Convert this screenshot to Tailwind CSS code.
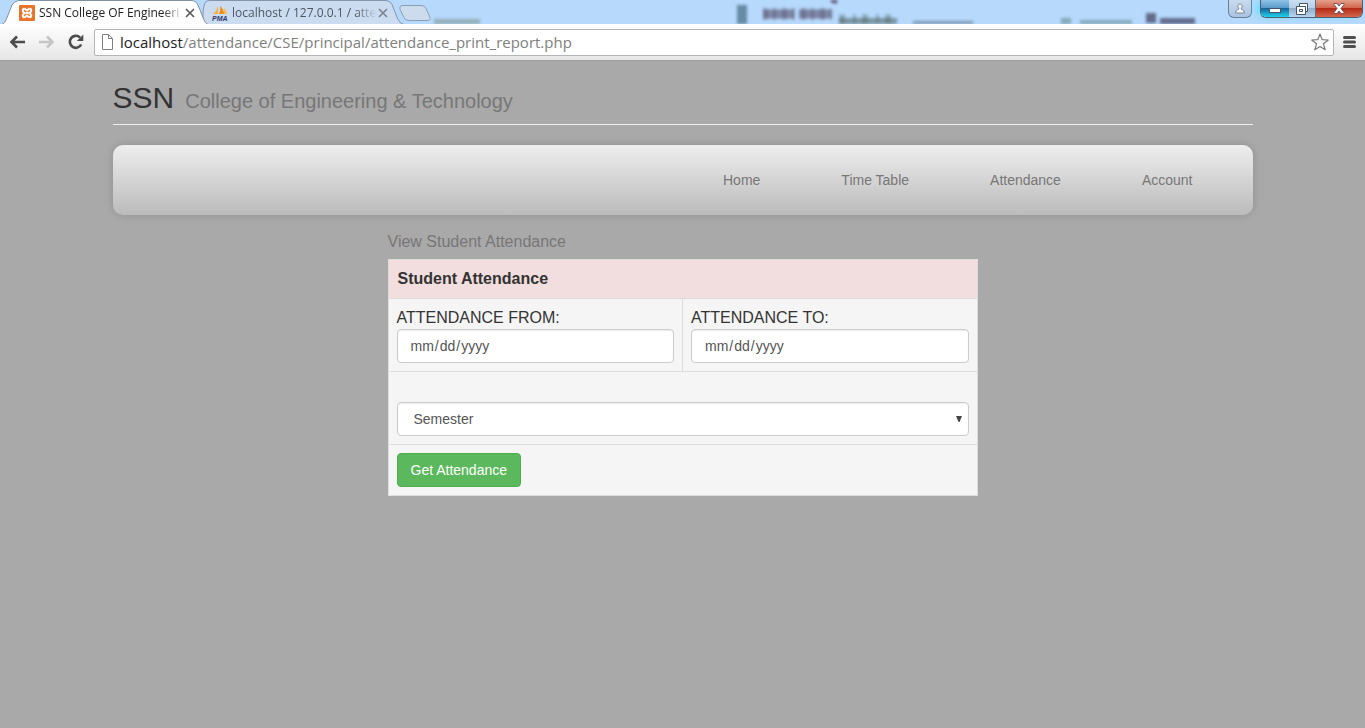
<!DOCTYPE html>
<html lang="en">
<head>
<meta charset="utf-8">
<meta name="viewport" content="width=device-width, initial-scale=1">
<title>SSN College OF Engineering</title>
<script src="https://cdn.jsdelivr.net/npm/@tailwindcss/browser@4"></script>
</head>
<body class="flex min-h-screen flex-col bg-[#a9a9a9] font-['Liberation_Sans',Arial,sans-serif] text-sm text-[#333]">

<header class="font-['Open_Sans','Noto_Sans',sans-serif]">
  <!-- Window title bar -->
  <div class="relative flex h-6 items-start overflow-hidden bg-[#b7d9fc]">
    <!-- Desktop showing softly through the glass -->
    <svg class="absolute right-0 top-0 h-6 w-[965px] blur-[1.5px]" viewBox="400 0 965 24" aria-hidden="true">
      <g fill="none">
        <path d="M434 22h46" stroke="#6f8578" stroke-width="6" opacity=".5"/>
        <path d="M742 5v19" stroke="#497088" stroke-width="10" opacity=".75"/>
        <path d="M763 14h31M799 14h33" stroke="#57506c" stroke-width="9" opacity=".6"/>
        <path d="M763 14h69" stroke="#57506c" stroke-width="12" stroke-dasharray="5 5 3 6" opacity=".35"/>
        <path d="M831 0l6 2" stroke="#57506c" stroke-width="4"/>
        <path d="M839 21h58" stroke="#4c625f" stroke-width="6" opacity=".55"/>
        <path d="M839 19h58" stroke="#4c625f" stroke-width="9" stroke-dasharray="6 8 3 6" opacity=".4"/>
        <path d="M913 23h60" stroke="#4c6175" stroke-width="4" opacity=".55"/>
        <path d="M1061 21h10M1080 23h52" stroke="#4d7a78" stroke-width="6" opacity=".5"/>
        <path d="M1146 18h10M1160 23h35" stroke="#3e3d5c" stroke-width="10" opacity=".7"/>
      </g>
    </svg>
    <svg class="absolute left-0 top-0 h-6 w-[440px]" viewBox="0 0 440 24" aria-hidden="true">
      <defs>
        <linearGradient id="tab" x2="0" y2="1"><stop offset="0" stop-color="#fff"/><stop offset="1" stop-color="#fdfdfd"/></linearGradient>
      </defs>
      <path d="M196 25q8-1 7-10Q203 5 206 1.500Q208 .5 210 .5H386q4 0 6 4l6 15q2 4 6 5z" fill="#cbdcf0" stroke="#8295ab"/>
      <path d="M402 5.500h19q4 0 5 3l4 9q1 3-3 3h-18q-4 0-5-3l-4-8q-1-4 2-4z" fill="#cddcec" stroke="#8a9db4"/>
      <path d="M-1 25q5 0 7-5l6-15q2-4 7-4.500H191q5 0 7 4.500l6 15q2 5 7 5z" fill="url(#tab)" stroke="#8090a3"/>
    </svg>
    <div class="relative flex h-6 flex-1 pl-[19px]">
      <div class="flex w-[193px] items-center pb-0.5 pt-1">
        <svg class="mb-px size-4 shrink-0" viewBox="0 0 16 16" aria-hidden="true">
          <rect width="16" height="16" rx="1" fill="#e8742b"/>
          <path d="M5.500 3.500L8 5.500l2.500-2M5.500 12.500L8 10.500l2.500 2M5.300 3.500a2 2 0 0 0-1 3.300L5.500 8 4.300 9.200a2 2 0 0 0 1 3.300M10.700 3.500a2 2 0 0 1 1 3.300L10.500 8l1.200 1.200a2 2 0 0 1-1 3.300M6.500 8h3" fill="none" stroke="#fff" stroke-width="2"/>
        </svg>
        <span class="ml-1 w-[145px] whitespace-nowrap text-xs leading-4 text-[#222] mask-r-from-85% mask-r-to-100%">SSN College OF Engineeri</span>
        <button class="size-3" aria-label="Close tab"><svg class="size-3" viewBox="0 0 12 12"><path d="M2 2l8 8M10 2l-8 8" stroke="#555" stroke-width="1.600"/></svg></button>
      </div>
      <div class="flex items-center pb-0.5 pt-1">
        <svg class="size-4 shrink-0" viewBox="0 0 16 16" aria-hidden="true">
          <path d="M6 0v9H1Q5 6 6 0z" fill="#f7b14a"/><path d="M8 1q4 3 4 8H7q2-4 1-8z" fill="#f29111"/><path d="M12 3q3 3 3 6h-3z" fill="#f9b95c"/>
          <text x="0" y="16" font-family="Liberation Sans" font-size="7" font-weight="bold" font-style="italic" fill="#33366d">PMA</text>
        </svg>
        <span class="ml-1 w-[145px] whitespace-nowrap text-xs leading-4 text-[#4d5661] mask-r-from-85% mask-r-to-100%">localhost / 127.0.0.1 / atte</span>
        <button class="size-3" aria-label="Close tab"><svg class="size-3" viewBox="0 0 12 12"><path d="M2 2l8 8M10 2l-8 8" stroke="#7c838c" stroke-width="1.600"/></svg></button>
      </div>
    </div>
    <div class="relative flex gap-2 pr-0.5">
      <button aria-label="Profile" class="flex h-[18px] w-6 items-center justify-center rounded-b-md border border-t-0 border-[#66809c] bg-linear-to-b from-[#c8dbef] to-[#abc4e0]">
        <svg class="h-3 w-3" viewBox="0 0 12 12"><path d="M6 1a2.300 2.300 0 0 1 1.200 4.200v1Q10.500 6.800 10.500 10h-9q0-3.200 3.300-3.800v-1A2.300 2.300 0 0 1 6 1z" fill="#fff" stroke="#6c7f95" stroke-width=".9"/></svg>
      </button>
      <div class="flex h-[18px] overflow-hidden rounded-b-md border border-t-0 border-[#4d5d72] shadow-[-6px_0_8px_-3px_#4fe3ff]">
        <button aria-label="Minimize" class="flex w-7 items-center justify-center bg-[linear-gradient(#8ec3e8,#5a9bcb_45%,#14669b_50%,#20d3ee)] pt-1">
          <svg class="h-[5px] w-3" viewBox="0 0 12 5"><rect x=".5" y=".5" width="11" height="4" fill="#fff" stroke="#435368"/></svg>
        </button>
        <button aria-label="Restore" class="flex w-[27px] items-center justify-center border-r border-[#5c6f87] bg-[linear-gradient(#ccdff2,#b9cfe8_45%,#92acc9_50%,#b8d6ef)]">
          <svg class="size-3" viewBox="0 0 12 12"><path d="M3.500.5h8v8h-2v3h-9v-8h3z" fill="#fff" stroke="#435368"/><path d="M3.500 3.500h6v5M3.500 6.500h3v2h-3z" fill="none" stroke="#435368"/></svg>
        </button>
        <button aria-label="Close window" class="flex w-[46px] items-center justify-center bg-[linear-gradient(#e5a08c,#d2674f_45%,#b52b16_50%,#d4674c)]">
          <svg class="h-[11px] w-3" viewBox="0 0 12 11"><path d="M1 .5h3l2 2.500L8 .5h3v1L8 5.500l3 4v1H8L6 8l-2 2.500H1v-1l3-4-3-4z" fill="#fff" stroke="#6b4a50" stroke-width=".9"/></svg>
        </button>
      </div>
    </div>
  </div>
  <!-- Toolbar -->
  <div class="flex h-[37px] items-center border-b border-[#a0a0a0] bg-linear-to-b from-white to-[#e6e6e6]">
    <div class="flex items-center gap-3 pl-2 pr-2">
      <button aria-label="Back"><svg class="size-[18px]" viewBox="0 0 18 18"><path d="M9 3.500L3.500 9 9 14.500M4 9h13" fill="none" stroke="#4b4b4b" stroke-width="2.600"/></svg></button>
      <button aria-label="Forward"><svg class="size-[18px]" viewBox="0 0 18 18"><path d="M9 3.500l5.500 5.500L9 14.500M14 9H1" fill="none" stroke="#c5c5c5" stroke-width="2.600"/></svg></button>
      <button aria-label="Reload"><svg class="size-[18px]" viewBox="0 0 18 18"><path d="M13.200 11.500A6 6 0 1 1 12 4.500" fill="none" stroke="#4b4b4b" stroke-width="2.600"/><path d="M15.300 1.500V8H8.800z" fill="#4b4b4b"/></svg></button>
    </div>
    <div class="flex h-[27px] flex-1 items-center rounded-xs border border-[#b5b5b5] bg-white pl-1.5 pr-1">
      <svg class="h-4 w-[13px]" viewBox="0 0 13 16" aria-hidden="true"><path d="M1.500.5h6l4 4v11h-10zM7.500.5v4h4" fill="#fff" stroke="#808080"/></svg>
      <div class="ml-1.5 flex-1 whitespace-nowrap text-[15px] leading-5 text-[#808080]"><span class="text-[#222]">localhost</span>/attendance/CSE/principal/attendance_print_report.php</div>
      <button aria-label="Bookmark this page"><svg class="size-[18px]" viewBox="0 0 18 18"><path d="M9 1l2.200 5.700 6.100.3-4.800 3.800 1.700 6L9 13.400l-5.200 3.400 1.700-6L.7 7l6.100-.3z" fill="#fff" stroke="#777" stroke-width="1.200" stroke-linejoin="round"/></svg></button>
    </div>
    <button aria-label="Menu" class="ml-2 mr-2"><svg class="h-[14px] w-[15px]" viewBox="0 0 15 14"><path d="M2.500 2.500h10M2.500 7h10M2.500 11.500h10" stroke="#4f4f4f" stroke-width="3" stroke-linecap="round"/></svg></button>
  </div>
</header>

<main class="mx-auto w-full max-w-[1170px] px-[15px] pt-5">
  <h1 class="flex items-baseline gap-[11px] border-b border-[#eee] pb-[9px] text-[30px] leading-[34px]">SSN <small class="text-xl leading-6 text-[#777]">College of Engineering &amp; Technology</small></h1>
  <nav class="mt-5 flex h-[70px] items-center justify-end gap-[81px] rounded-[10px] bg-linear-to-b from-[#eee] to-[#bbb] pr-[60px] text-[#777] shadow-[0_0_10px_rgba(0,0,0,0.15)]">
    <a href="#">Home</a><a href="#">Time Table</a><a href="#">Attendance</a><a href="#">Account</a>
  </nav>
  <form class="mx-auto mt-4 max-w-[590px] text-base leading-[22px]">
    <h2 class="mb-1.5 text-[#777]">View Student Attendance</h2>
    <table class="w-full table-fixed border-collapse border border-[#ddd] bg-[#f5f5f5]">
      <thead>
        <tr><th colspan="2" class="border border-[#ddd] bg-[#f2dede] px-[9px] py-2 text-left">Student Attendance</th></tr>
      </thead>
      <tbody>
        <tr>
          <td class="border border-[#ddd] p-2"><label for="from" class="block">ATTENDANCE FROM:</label>
            <input id="from" type="date" class="block h-[34px] w-full rounded border border-[#ccc] bg-white px-3 text-sm text-[#555] shadow-[inset_0_1px_1px_rgba(0,0,0,0.08)] [&::-webkit-calendar-picker-indicator]:hidden"></td>
          <td class="border border-[#ddd] p-2"><label for="to" class="block">ATTENDANCE TO:</label>
            <input id="to" type="date" class="block h-[34px] w-full rounded border border-[#ccc] bg-white px-3 text-sm text-[#555] shadow-[inset_0_1px_1px_rgba(0,0,0,0.08)] [&::-webkit-calendar-picker-indicator]:hidden"></td>
        </tr>
        <tr>
          <td colspan="2" class="border border-[#ddd] px-2 pb-2 pt-[30px]">
            <div class="relative">
              <select aria-label="Semester" class="block h-[34px] w-full appearance-none rounded border border-[#ccc] bg-white px-4 text-sm text-[#555] shadow-[inset_0_1px_1px_rgba(0,0,0,0.08)]"><option>Semester</option></select>
              <svg class="pointer-events-none absolute right-[7px] top-3.5 h-1.5 w-1.5" viewBox="0 0 6 6" aria-hidden="true"><path d="M0 0h6L3.500 6h-1z" fill="#444"/></svg>
            </div>
          </td>
        </tr>
        <tr>
          <td colspan="2" class="border border-[#ddd] p-2"><button type="button" class="block h-[34px] rounded border border-[#4cae4c] bg-[#5cb85c] px-[13px] text-sm text-white">Get Attendance</button></td>
        </tr>
      </tbody>
    </table>
  </form>
</main>
</body>
</html>
